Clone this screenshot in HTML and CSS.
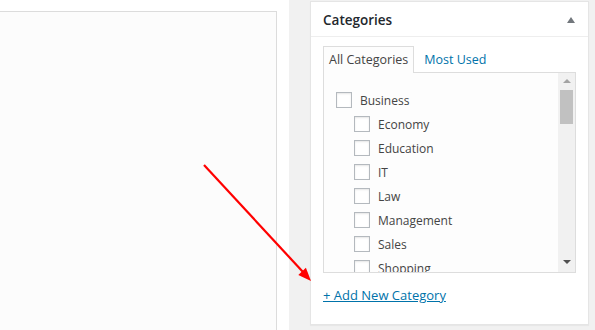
FILE: index.html
```html
<!DOCTYPE html>
<html>
<head>
<meta charset="utf-8">
<link rel="stylesheet" href="styles.css">
</head>
<body>
<div class="page">
  <div class="main-col">
    <div class="editor-box"></div>
  </div>
  <div class="side-col">
    <div class="postbox">
      <div class="postbox-header">
        <h2 class="postbox-title">Categories</h2>
        <span class="toggle-arrow"></span>
      </div>
      <div class="inside">
        <ul class="tabs">
          <li class="tab tab-active">All Categories</li>
          <li class="tab"><a class="tab-link" href="#">Most Used</a></li>
        </ul>
        <div class="tabs-panel">
          <ul class="checklist">
            <li class="row"><span class="cb"></span><span class="label">Business</span></li>
            <li class="row child"><span class="cb"></span><span class="label">Economy</span></li>
            <li class="row child"><span class="cb"></span><span class="label">Education</span></li>
            <li class="row child"><span class="cb"></span><span class="label">IT</span></li>
            <li class="row child"><span class="cb"></span><span class="label">Law</span></li>
            <li class="row child"><span class="cb"></span><span class="label">Management</span></li>
            <li class="row child"><span class="cb"></span><span class="label">Sales</span></li>
            <li class="row child"><span class="cb"></span><span class="label">Shopping</span></li>
          </ul>
          <div class="scrollbar">
            <span class="sb-up"></span>
            <span class="sb-thumb"></span>
            <span class="sb-down"></span>
          </div>
        </div>
        <a class="add-new" href="#">+ Add New Category</a>
      </div>
    </div>
  </div>
</div>
<svg class="annot" width="595" height="330" viewBox="0 0 595 330">
  <line x1="204" y1="165" x2="303" y2="272" stroke="#ff0000" stroke-width="2.2"/>
  <polygon points="311,281 298.3,275 305.9,267.8" fill="#ff0000"/>
</svg>
</body>
</html>
```
FILE: styles.css
```css
* { box-sizing: border-box; }
html, body { margin: 0; padding: 0; }
body {
  width: 595px;
  height: 330px;
  overflow: hidden;
  font-family: "Open Sans", "Noto Sans", sans-serif;
  color: #444;
  position: relative;
}
.page {
  display: flex;
  height: 330px;
}
.main-col {
  width: 289px;
  background: #fff;
  padding-top: 11px;
  padding-right: 12px;
}
.editor-box {
  height: 330px;
  background: #fcfcfc;
  border: 1px solid #dcdcdc;
  border-left: none;
  border-bottom: none;
}
.side-col {
  flex: 1;
  background: #f1f1f1;
  padding: 1px 6px 0 21px;
}
.postbox {
  width: 279px;
  height: 324px;
  background: #fff;
  border: 1px solid #e5e5e5;
  box-shadow: 0 1px 1px rgba(0,0,0,.04);
}
.postbox-header {
  height: 35px;
  border-bottom: 1px solid #eee;
  display: flex;
  align-items: center;
  justify-content: space-between;
  padding: 1px 13px 0 12px;
}
.postbox-title {
  margin: 0;
  font-size: 13.5px;
  font-weight: 600;
  color: #23282d;
}
.toggle-arrow {
  width: 0;
  height: 0;
  border-left: 4.5px solid transparent;
  border-right: 4.5px solid transparent;
  border-bottom: 6px solid #72777c;
  margin-top: 1px;
}
.inside {
  padding: 9px 12px 0 12px;
}
.tabs {
  list-style: none;
  margin: 0;
  padding: 0;
  display: flex;
  gap: 4px;
  position: relative;
  z-index: 1;
  margin-bottom: -1px;
}
.tab {
  font-size: 12.5px;
  height: 27px;
  line-height: 26px;
  padding: 0 5px;
  border: 1px solid transparent;
  border-bottom: none;
}
.tab-active {
  background: #fdfdfd;
  border-color: #ddd;
  color: #444;
}
.tab-link {
  color: #0073aa;
  text-decoration: none;
}
.tabs-panel {
  height: 201px;
  border: 1px solid #ddd;
  background: #fdfdfd;
  display: flex;
  overflow: hidden;
}
.checklist {
  flex: 1;
  list-style: none;
  margin: 0;
  padding: 15px 0 0 12px;
}
.row {
  height: 24px;
  display: flex;
  align-items: center;
  font-size: 12px;
  color: #444;
}
.row.child {
  padding-left: 18px;
}
.cb {
  width: 16px;
  height: 16px;
  border: 1px solid #b4b9be;
  background: #fff;
  box-shadow: inset 0 1px 2px rgba(0,0,0,.1);
  margin-right: 8px;
  flex: none;
}
.scrollbar {
  width: 17px;
  background: #f1f1f1;
  position: relative;
  display: flex;
  flex-direction: column;
  align-items: center;
}
.sb-up {
  margin-top: 6px;
  width: 0;
  height: 0;
  border-left: 4px solid transparent;
  border-right: 4px solid transparent;
  border-bottom: 4px solid #a3a3a3;
}
.sb-thumb {
  margin-top: 7px;
  width: 13px;
  height: 34px;
  background: #c1c1c1;
}
.sb-down {
  margin-top: auto;
  margin-bottom: 8px;
  width: 0;
  height: 0;
  border-left: 4px solid transparent;
  border-right: 4px solid transparent;
  border-top: 4px solid #505050;
}
.add-new {
  display: inline-block;
  margin-top: 13px;
  font-size: 13px;
  color: #0073aa;
  text-decoration: underline;
  line-height: 18px;
}
.annot {
  position: absolute;
  left: 0;
  top: 0;
  pointer-events: none;
}
```
